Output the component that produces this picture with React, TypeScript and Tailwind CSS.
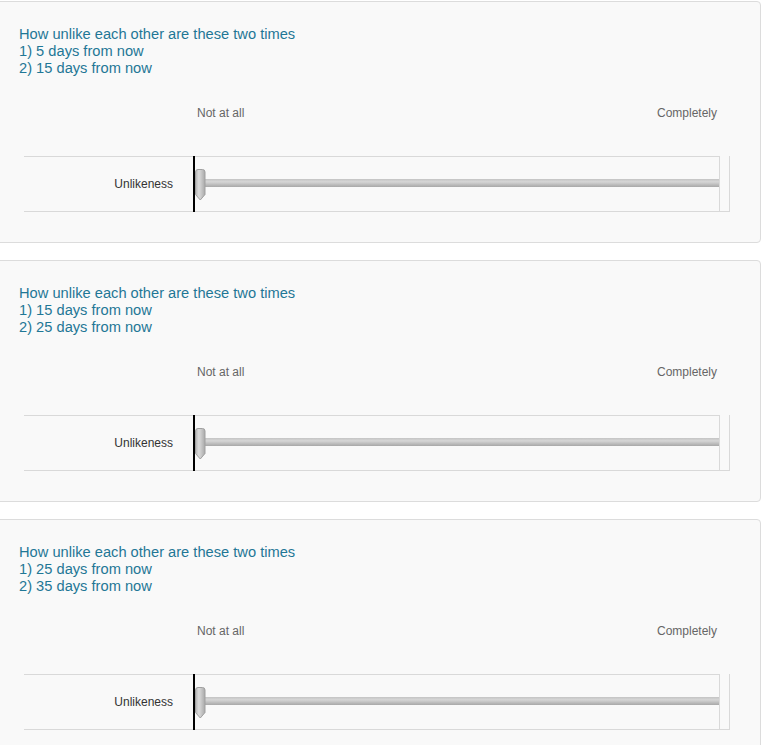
import React from "react";

const questions = [
  { a: "5", b: "15" },
  { a: "15", b: "25" },
  { a: "25", b: "35" },
];

function Handle() {
  return (
    <svg width="11" height="32" viewBox="0 0 11 32" className="absolute left-0 top-[12px]">
      <defs>
        <linearGradient id="hg" x1="0" y1="0" x2="1" y2="0">
          <stop offset="0" stopColor="#b4b4b4" />
          <stop offset="0.35" stopColor="#dcdcdc" />
          <stop offset="1" stopColor="#a9a9a9" />
        </linearGradient>
      </defs>
      <path
        d="M0.5 3 Q0.5 0.5 3 0.5 H7.5 Q10 0.5 10 3 V25.5 L5.3 31 L0.5 25.5 Z"
        fill="url(#hg)"
        stroke="#a0a0a0"
        strokeWidth="1"
      />
    </svg>
  );
}

function Card({ a, b }: { a: string; b: string }) {
  return (
    <div className="ml-[-10px] mb-[17px] w-[771px] rounded-[4px] border border-[#dcdcdc] bg-[#f9f9f9] pl-[28px] pr-[30px] pt-[24px] pb-[30px]">
      <div className="text-[14.67px] leading-[17px] text-[#1f7796]">
        <div>How unlike each other are these two times</div>
        <div>1) {a} days from now</div>
        <div>2) {b} days from now</div>
      </div>
      <div className="mt-[29px] ml-[178px] flex w-[520px] justify-between text-[12px] leading-[14px] text-[#666666]">
        <span>Not at all</span>
        <span>Completely</span>
      </div>
      <div className="mt-[36px] ml-[5px] flex h-[56px] border-b border-r border-[#d9d9d9]">
        <div className="flex flex-1 items-stretch">
          <div className="flex w-[169px] items-center justify-end border-t border-[#d9d9d9] pr-[20px] text-[12px] text-[#333333]">
            Unlikeness
          </div>
          <div className="-mb-px w-[2px] bg-black" />
          <div className="relative flex-1 border-t border-r border-[#d9d9d9]">
            <div className="mt-[22px] h-[8px] bg-[linear-gradient(to_bottom,#c4c4c4_0%,#d6d6d6_35%,#bdbdbd_70%,#a8a8a8_100%)]" />
            <Handle />
          </div>
        </div>
        <div className="w-[9px]" />
      </div>
    </div>
  );
}

export default function App() {
  return (
    <div
      className="min-h-[745px] overflow-hidden bg-white pt-[1px]"
      style={{ fontFamily: '"Liberation Sans", Arial, sans-serif' }}
    >
      {questions.map((q, i) => (
        <Card key={i} a={q.a} b={q.b} />
      ))}
    </div>
  );
}
